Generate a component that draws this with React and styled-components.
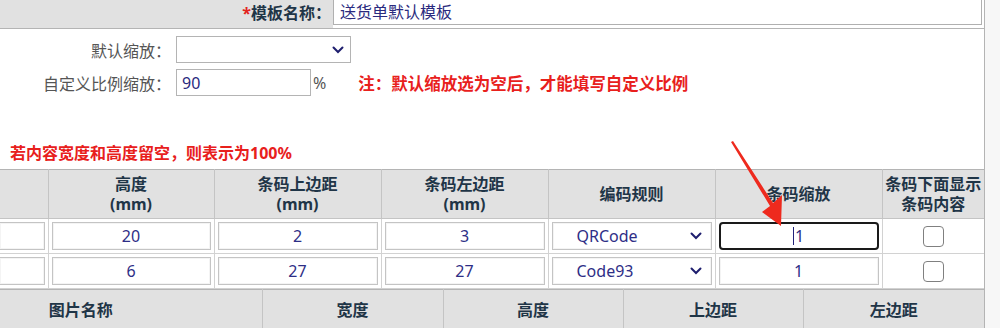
import React from "react";
import styled, { createGlobalStyle } from "styled-components";

const GlobalStyle = createGlobalStyle`
  body {
    margin: 0;
    background: #ffffff;
    font-family: "Noto Sans", "Noto Sans CJK SC", sans-serif;
    overflow: hidden;
  }
`

const Page = styled.div`
  position: relative;
  display: flex;
  width: 1000px;
  height: 328px;
  overflow: hidden;
`

const Main = styled.div`
  width: 984px;
  border-right: 1px solid #b4b4b4;
  display: flex;
  flex-direction: column;
  & > * {
    flex-shrink: 0;
  }
`

const SideStrip = styled.div`
  flex: 1;
  background: #f7f7f7;
`

const NameRow = styled.div`
  display: flex;
  height: 28px;
  border-bottom: 1px solid #b4b4b4;
`

const NameLabel = styled.div`
  width: 333px;
  box-sizing: border-box;
  background: #e1e1e1;
  text-align: right;
  padding-right: 2px;
  font-size: 16px;
  font-weight: bold;
  line-height: 26px;
  color: #1f3547;
`

const Star = styled.span`
  color: #e3231e;
`

const NameInputCell = styled.div`
  flex: 1;
  padding-right: 2px;
`

const NameInput = styled.div`
  height: 25px;
  box-sizing: border-box;
  border: 1px solid #b0b0b0;
  border-top: none;
  padding-left: 6px;
  font-size: 16px;
  line-height: 24px;
  color: #2a2a7e;
`

const Settings = styled.div`
  height: 140px;
  padding-top: 7px;
  box-sizing: border-box;
  display: flex;
  flex-direction: column;
`

const FieldRow = styled.div`
  display: flex;
  align-items: center;
  height: 27px;
  margin-bottom: 6px;
`

const FieldLabel = styled.div`
  width: 176px;
  box-sizing: border-box;
  padding-right: 5px;
  text-align: right;
  font-size: 16px;
  color: #555555;
`

const Box = styled.div`
  width: ${p => p.w}px;
  height: 27px;
  box-sizing: border-box;
  border: 1px solid #b4b4b4;
  display: flex;
  align-items: center;
  justify-content: space-between;
  padding: 0 6px 0 5px;
  font-size: 16px;
  color: #2a2a7e;
  background: #fff;
`

const Unit = styled.span`
  margin-left: 2px;
  font-size: 16px;
  color: #555;
`

const Note = styled.span`
  margin-left: 32px;
  font-size: 16.5px;
  font-weight: bold;
  color: #e8201c;
`

const Warning = styled.div`
  margin-top: 38px;
  padding-left: 10px;
  font-size: 16px;
  font-weight: bold;
  color: #e8201c;
`

const Table = styled.table`
  border-collapse: collapse;
  table-layout: fixed;
  width: 984px;
`

const HeadRow = styled.tr`
  height: ${p => p.h}px;
`

const BodyRow = styled.tr`
  height: 35px;
`

const Th = styled.th`
  background: #e1e1e1;
  border: 1px solid #c4c4c4;
  border-top-color: #b4b4b4;
  padding: 0 ${p => p.pr || 0}px 0 0;
  font-size: 16px;
  font-weight: bold;
  line-height: 20px;
  color: #1f3547;
  &:first-child {
    border-left: none;
  }
  &:last-child {
    border-right: none;
  }
`

const Td = styled.td`
  border: 1px solid #d2d2d2;
  padding: 0 3px;
  &:first-child {
    border-left: none;
    padding-left: 0;
  }
  &:last-child {
    border-right: none;
  }
`

const CellInput = styled.div`
  height: 28px;
  box-sizing: border-box;
  border: ${p => (p.focused ? "2px solid #1a1a1a" : "1px solid #c4c4c4")};
  border-left-width: ${p => (p.clipped ? 0 : p.focused ? 2 : 1)}px;
  border-radius: ${p => (p.focused ? 4 : 0)}px;
  box-shadow: ${p => (p.focused ? "none" : "inset 0 0 0 1px #f4f4f4")};
  display: flex;
  align-items: center;
  justify-content: center;
  font-size: 16px;
  color: #2e2e86;
`

const Caret = styled.span`
  display: inline-block;
  width: 1px;
  height: 18px;
  background: #22227a;
  margin-right: 1px;
`

const CellSelect = styled.div`
  height: 28px;
  box-sizing: border-box;
  border: 1px solid #c4c4c4;
  box-shadow: inset 0 0 0 1px #f4f4f4;
  display: flex;
  align-items: center;
  justify-content: space-between;
  padding: 0 9px 0 24px;
  font-size: 16px;
  color: #2e2e86;
`

const CheckBox = styled.div`
  width: 21px;
  height: 21px;
  box-sizing: border-box;
  margin: 0 auto;
  border: 1.5px solid #808080;
  border-radius: 4px;
  background: #fff;
`

const Arrow = styled.svg`
  position: absolute;
  left: 0;
  top: 0;
  pointer-events: none;
`

function Chevron() {
  return (
    <svg width="12" height="8" viewBox="0 0 12 8">
      <path d="M1.5 1.5 L6 6 L10.5 1.5" fill="none" stroke="#1e1e6e" strokeWidth="2" strokeLinecap="round" />
    </svg>
  );
}

const barcodeRows = [
  { h: "20", top: "2", left: "3", rule: "QRCode", scale: "1", focused: true },
  { h: "6", top: "27", left: "27", rule: "Code93", scale: "1", focused: false },
];

function App() {
  return (
    <Page>
      <GlobalStyle />
      <Main>
        <NameRow>
          <NameLabel><Star>*</Star>模板名称：</NameLabel>
          <NameInputCell>
            <NameInput>送货单默认模板</NameInput>
          </NameInputCell>
        </NameRow>

        <Settings>
          <FieldRow>
            <FieldLabel>默认缩放：</FieldLabel>
            <Box w={175}>
              <span />
              <Chevron />
            </Box>
          </FieldRow>
          <FieldRow>
            <FieldLabel>自定义比例缩放：</FieldLabel>
            <Box w={135}>90</Box>
            <Unit>%</Unit>
            <Note>注：默认缩放选为空后，才能填写自定义比例</Note>
          </FieldRow>
          <Warning>若内容宽度和高度留空，则表示为100%</Warning>
        </Settings>

        <Table>
          <colgroup>
            <col style={{ width: 48 }} />
            <col style={{ width: 166 }} />
            <col style={{ width: 167 }} />
            <col style={{ width: 167 }} />
            <col style={{ width: 167 }} />
            <col style={{ width: 167 }} />
            <col style={{ width: 102 }} />
          </colgroup>
          <thead>
            <HeadRow h={49}>
              <Th></Th>
              <Th>高度<br />(mm)</Th>
              <Th>条码上边距<br />(mm)</Th>
              <Th>条码左边距<br />(mm)</Th>
              <Th>编码规则</Th>
              <Th>条码缩放</Th>
              <Th>条码下面显示<br />条码内容</Th>
            </HeadRow>
          </thead>
          <tbody>
            {barcodeRows.map((r, i) => (
              <BodyRow key={i}>
                <Td><CellInput clipped /></Td>
                <Td><CellInput>{r.h}</CellInput></Td>
                <Td><CellInput>{r.top}</CellInput></Td>
                <Td><CellInput>{r.left}</CellInput></Td>
                <Td>
                  <CellSelect>
                    <span>{r.rule}</span>
                    <Chevron />
                  </CellSelect>
                </Td>
                <Td>
                  <CellInput focused={r.focused}>
                    {r.focused && <Caret />}
                    {r.scale}
                  </CellInput>
                </Td>
                <Td><CheckBox /></Td>
              </BodyRow>
            ))}
          </tbody>
        </Table>

        <Table>
          <colgroup>
            <col style={{ width: 262 }} />
            <col style={{ width: 181 }} />
            <col style={{ width: 180 }} />
            <col style={{ width: 180 }} />
            <col style={{ width: 181 }} />
          </colgroup>
          <thead>
            <HeadRow h={40}>
              <Th pr={100}>图片名称</Th>
              <Th>宽度</Th>
              <Th>高度</Th>
              <Th>上边距</Th>
              <Th>左边距</Th>
            </HeadRow>
          </thead>
        </Table>
      </Main>
      <SideStrip />

      <Arrow width="1000" height="328" viewBox="0 0 1000 328">
        <path d="M731 142 L733 141 L773 203 L782 195 L781 226 L762 212 L770 206 Z" fill="#ee2a1e" />
      </Arrow>
    </Page>
  );
}

export default App;
